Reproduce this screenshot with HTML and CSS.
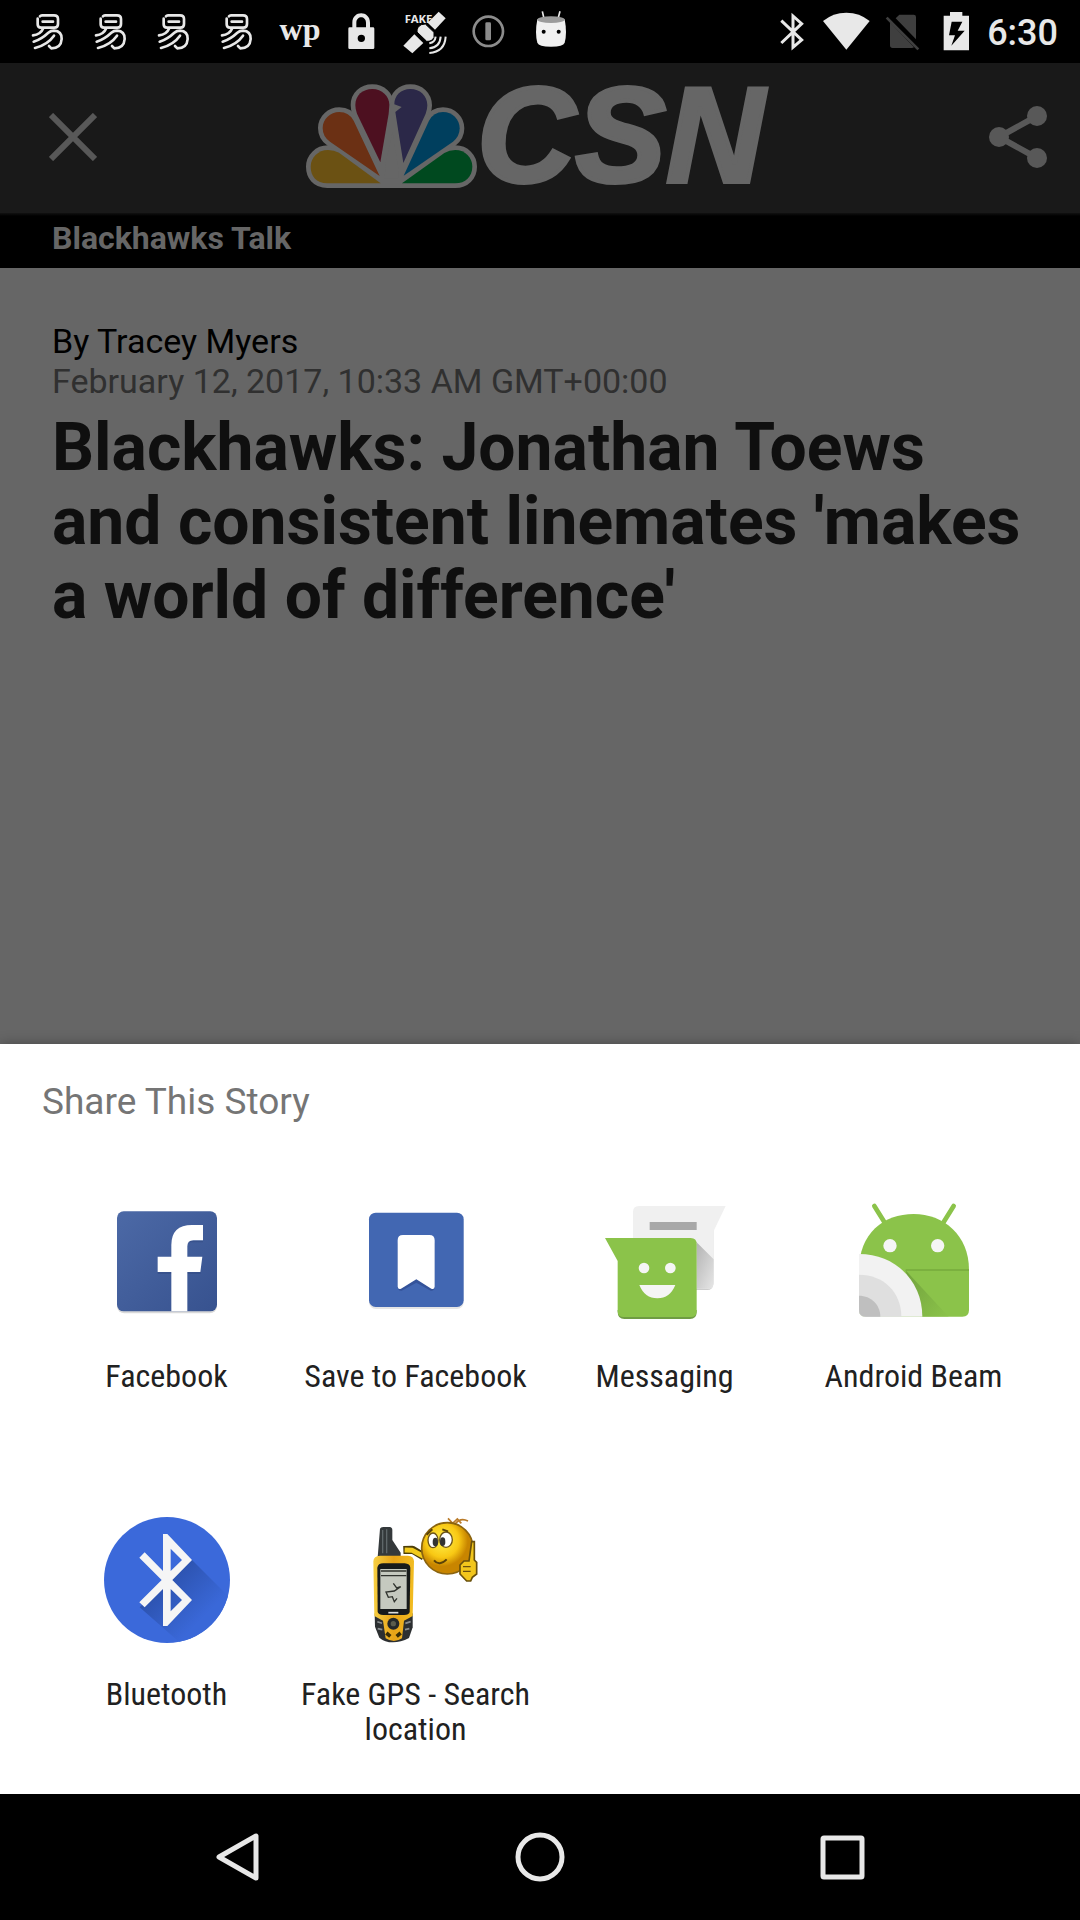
FILE: index.html
```html
<!DOCTYPE html>
<html lang="en">
<head>
<meta charset="utf-8">
<meta name="viewport" content="width=device-width, initial-scale=1">
<title>Blackhawks Talk</title>
<link rel="stylesheet" href="styles.css">
</head>
<body>
<svg class="defs" aria-hidden="true">
  <defs>
    <symbol id="yi" viewBox="48 0 189 189">
      <g fill="none" stroke="#e8e8e8" stroke-width="8" stroke-linecap="round" stroke-linejoin="round">
        <path d="M113 56V73Q113 83 123 83H163Q174 83 174 72V57Q174 46 162 46H126Q122 46 120 49"/>
        <path d="M128 65H159"/>
        <path d="M129 86Q122 103 99 106"/>
        <path d="M101 125Q125 117 145 98Q152 92 162 92Q186 93 185 117Q183 145 154 145L147 138"/>
        <path d="M105 144Q143 134 162 107"/>
      </g>
    </symbol>
  </defs>
</svg>

<header class="status">
  <div class="status-group">
    <svg class="slot"><use href="#yi"/></svg>
    <svg class="slot"><use href="#yi"/></svg>
    <svg class="slot"><use href="#yi"/></svg>
    <svg class="slot"><use href="#yi"/></svg>
    <svg class="slot" viewBox="0 0 63 63"><text class="wp" x="32" y="40" text-anchor="middle">wp</text></svg>
    <svg class="slot" viewBox="-87 0 189 189"><path fill="#e8e8e8" fill-rule="evenodd" d="M-31 82H-23V68C-23 30 30 30 30 68V82H39Q43 82 43 86V143Q43 147 39 147H-31Q-35 147-35 143V86Q-35 82-31 82ZM-11 82H18V68C18 46-11 46-11 68ZM4 104A11 11 0 1 0 4 126A11 11 0 1 0 4 104Z"/></svg>
    <svg class="slot" viewBox="102 0 189 189">
      <text class="fake" x="134" y="68">FAKE</text>
      <g fill="#e8e8e8">
        <path d="M203 68L236 35L257 55L225 89Z"/>
        <path d="M163 103L190 129L157 160L130 137Z"/>
        <path stroke="#000" stroke-width="3" d="M184 74Q170 81 171 96L200 124Q216 125 222 112V97L196 72Z"/>
      </g>
      <g fill="none" stroke="#e8e8e8" stroke-width="6"><path d="M227 110Q225 127 208 130M242 110Q240 142 208 145M257 110Q254 156 208 159"/></g>
    </svg>
    <svg class="slot" viewBox="291 0 189 189"><circle cx="385" cy="94" r="44" fill="none" stroke="#8c8c8c" stroke-width="8"/><rect x="376" y="67" width="17" height="54" rx="4" fill="#8c8c8c"/></svg>
    <svg class="slot" viewBox="480 0 189 189"><path d="M547 34L552 56M600 34L594 56" stroke="#e8e8e8" stroke-width="5"/><path fill="#f0f0f0" d="M532 58H614Q622 100 614 128Q610 140 573 140T532 128Q524 100 532 58Z"/><ellipse cx="573" cy="59" rx="41" ry="10" fill="#9b9b9b"/><circle cx="551" cy="95" r="6"/><circle cx="596" cy="95" r="6"/></svg>
  </div>
  <div class="status-group status-right">
    <svg class="slot s-bt" viewBox="96 0 120 189"><path fill="none" stroke="#e8e8e8" stroke-width="9" d="M121 62L182 120L156 142V48L182 71L121 129"/></svg>
    <svg class="slot s-md" viewBox="216 0 180 189"><path fill="#e8e8e8" d="M316 149L246 63Q276 38 316 38T386 63Z"/></svg>
    <svg class="slot s-md" viewBox="396 0 180 189"><path fill="#3f3f3f" d="M464 55L475 44H518Q525 44 525 51V118ZM447 67L519 142Q516 144 512 144H455Q447 144 447 136Z"/><path d="M437 53L532 148" stroke="#3f3f3f" stroke-width="8"/></svg>
    <svg class="slot s-sm" viewBox="576 0 150 189"><path fill="#e8e8e8" fill-rule="evenodd" d="M627 36H664V47H684V151H608V47H627ZM632 65L624 106H642L631 137L671 92H650L664 65Z"/></svg>
    <time class="clock">6:30</time>
  </div>
</header>

<main class="story">
  <div class="topbar">
    <button class="icon-btn" type="button" aria-label="Close"><svg width="48" height="48" viewBox="0 0 48 48"><path d="M2 2L46 46M46 2L2 46" stroke="#585858" stroke-width="6"/></svg></button>
    <svg class="logo" viewBox="48 68 1404 324" role="img" aria-label="NBC CSN">
      <g fill="#666" stroke="#666" stroke-width="28" stroke-linejoin="round">
        <path d="M272 369H112C78 369 62 346 62 319C62 292 84 269 114 269Q132 269 147 277Z"/>
        <path d="M269 347L120 244Q98 229 98 203C98 176 121 155 148 155Q177 155 191 181Z"/>
        <path d="M271 306L201 160Q196 148 196 134C196 105 218 86 247 86C276 86 298 107 298 134L296 160Z"/>
        <path d="M340 308L316 155L335 140L313 132C313 105 333 86 361 86C390 86 412 106 412 135Q412 148 407 160Z"/>
        <path d="M341 346L417 181Q431 155 459 155C487 155 509 177 509 204Q509 228 489 244Z"/>
        <path d="M336 369L463 278Q478 269 496 269C526 269 547 292 547 319C547 348 526 369 496 369Z"/>
        <path d="M270 369H340V330L310 140L272 310Z"/>
      </g>
      <path fill="#6b5113" d="M272 369H112C78 369 62 346 62 319C62 292 84 269 114 269Q132 269 147 277Z"/>
      <path fill="#6b3014" d="M269 347L120 244Q98 229 98 203C98 176 121 155 148 155Q177 155 191 181Z"/>
      <path fill="#4d1020" d="M271 306L201 160Q196 148 196 134C196 105 218 86 247 86C276 86 298 107 298 134L296 160Z"/>
      <path fill="#2b2848" d="M340 308L316 155L335 140L313 132C313 105 333 86 361 86C390 86 412 106 412 135Q412 148 407 160Z"/>
      <path fill="#003f5e" d="M341 346L417 181Q431 155 459 155C487 155 509 177 509 204Q509 228 489 244Z"/>
      <path fill="#00491f" d="M336 369L463 278Q478 269 496 269C526 269 547 292 547 319C547 348 526 369 496 369Z"/>
      <text class="csn" x="561" y="365">CSN</text>
    </svg>
    <button class="icon-btn icon-btn-end" type="button" aria-label="Share"><svg width="58" height="62" viewBox="0 0 58 62"><path d="M48 10L10 31L48 52" fill="none" stroke="#585858" stroke-width="6"/><g fill="#585858"><circle cx="48" cy="10" r="10"/><circle cx="10" cy="31" r="10"/><circle cx="48" cy="52" r="10"/></g></svg></button>
  </div>
  <div class="section-name">Blackhawks Talk</div>
  <article class="article">
    <p class="byline">By Tracey Myers</p>
    <p class="date">February 12, 2017, 10:33 AM GMT+00:00</p>
    <h1 class="headline">Blackhawks: Jonathan Toews and consistent linemates 'makes a world of difference'</h1>
  </article>
</main>

<section class="sheet" aria-labelledby="share-title">
  <h2 class="sheet-title" id="share-title">Share This Story</h2>
  <div class="targets">
    <button class="target" type="button">
      <svg class="app" viewBox="41 57 378 378">
        <defs><linearGradient id="fbg" x2="1" y2="1"><stop offset="0" stop-color="#4c69a6"/><stop offset="1" stop-color="#37528f"/></linearGradient></defs>
        <rect x="80" y="98" width="300" height="302" rx="22" fill="#000" opacity=".15"/>
        <rect x="80" y="94" width="300" height="300" rx="20" fill="url(#fbg)"/>
        <path fill="#2f4880" opacity=".5" d="M202 276H331V282H202ZM291 190Q291 183 303 183H338V187H300Z"/>
        <path fill="#fff" d="M243 394V276H202V230H243V195Q243 135 305 135H338V181H309Q291 181 291 199V230H336L330 276H291V394Z"/>
      </svg>
      <span class="label">Facebook</span>
    </button>
    <button class="target" type="button">
      <svg class="app" viewBox="787 57 378 378">
        <rect x="835" y="103" width="284" height="284" rx="20" fill="#000" opacity=".1"/>
        <rect x="835" y="98" width="284" height="283" rx="20" fill="#4267b2"/>
        <path fill="#34539a" d="M921 190V322Q922 334 933 332L977 308L1020 332Q1031 334 1032 322V190Z"/>
        <path fill="#fff" d="M937 165H1016Q1032 165 1032 181V320Q1031 329 1022 326L977 298L931 326Q922 329 921 320V181Q921 165 937 165Z"/>
      </svg>
      <span class="label">Save to Facebook</span>
    </button>
    <button class="target" type="button">
      <svg class="app" viewBox="34 57 378 378">
        <defs><linearGradient id="sh" x2="1" y2="1"><stop offset="0" stop-color="#aaa"/><stop offset="1" stop-color="#e6e6e6"/></linearGradient></defs>
        <path fill="#ccc" d="M127 100H368V312Q366 330 350 330H145Q127 330 127 312Z"/>
        <path fill="#f0f0f0" d="M145 78H405L369 153V308Q369 326 351 326H127V96Q127 78 145 78Z"/>
        <path fill="url(#sh)" d="M305 174L369 238V308Q369 326 351 326H318V190Z"/>
        <rect x="177" y="126" width="141" height="24" fill="#a8a8a8"/>
        <path fill="#6f9c43" d="M81 390V396Q81 417 101 417H298Q318 417 318 396V390Z"/>
        <path fill="#8bc34a" d="M43 174H300Q318 174 318 192V393Q318 411 300 411H99Q81 411 81 393V243Z"/>
        <circle cx="160" cy="264" r="16" fill="#f5f5f5"/><circle cx="239" cy="264" r="16" fill="#f5f5f5"/>
        <path fill="#f5f5f5" d="M146 315H254Q238 355 200 355T146 315Z"/>
      </svg>
      <span class="label">Messaging</span>
    </button>
    <button class="target" type="button">
      <svg class="app" viewBox="782 57 378 378">
        <defs><linearGradient id="bsh" x2="1" y2="1"><stop offset="0" stop-color="#588030"/><stop offset="1" stop-color="#8bc34a"/></linearGradient></defs>
        <path d="M852 78L888 136M1090 78L1054 136" stroke="#8bc34a" stroke-width="14" stroke-linecap="round"/>
        <path fill="#8bc34a" d="M806 270C806 160 880 102 970 102S1136 165 1136 270V390Q1136 410 1116 410H826Q806 410 806 390Z"/>
        <path fill="url(#bsh)" d="M945 270L1075 410H990Z" opacity=".5"/>
        <path d="M946 270H1136" stroke="#76aa3c" stroke-width="4"/>
        <circle cx="899" cy="197" r="20" fill="#f5f5f5"/><circle cx="1042" cy="197" r="20" fill="#f5f5f5"/>
        <path fill="#f2f2f2" d="M806 222C915 222 996 303 996 410H826Q806 410 806 390Z"/>
        <path fill="#dfdfdf" d="M806 284C880 284 933 337 933 410H826Q806 410 806 390Z"/>
        <path fill="#bfbfbf" d="M806 347C842 347 870 374 870 410H826Q806 410 806 390Z"/>
      </svg>
      <span class="label">Android Beam</span>
    </button>
    <button class="target" type="button">
      <svg class="app" viewBox="41 51 378 378">
        <defs><linearGradient id="bts" gradientUnits="userSpaceOnUse" x1="230" y1="200" x2="360" y2="330"><stop offset="0" stop-color="#2a4fa8"/><stop offset="1" stop-color="#3a68d8"/></linearGradient><clipPath id="btc"><circle cx="230" cy="240" r="189"/></clipPath></defs>
        <circle cx="230" cy="240" r="189" fill="#3b69da"/>
        <path clip-path="url(#btc)" fill="url(#bts)" d="M305 180L420 295V429H270L148 322L230 240Z"/>
        <path fill="#f5f5f5" fill-rule="evenodd" d="M218 102H231L305 180L246 240L305 300L231 378H218V267L163 322L147 307L214 240L147 173L163 157L218 213ZM241 146V213L275 180ZM241 267V334L275 300Z"/>
      </svg>
      <span class="label">Bluetooth</span>
    </button>
    <button class="target" type="button">
      <svg class="app" viewBox="787 51 378 378">
        <defs>
          <radialGradient id="face" cx=".4" cy=".35"><stop offset="0" stop-color="#fff04a"/><stop offset=".65" stop-color="#f8c814"/><stop offset="1" stop-color="#c88500"/></radialGradient>
          <linearGradient id="gps"><stop offset="0" stop-color="#f7cf42"/><stop offset=".5" stop-color="#e8a317"/><stop offset="1" stop-color="#f2bd22"/></linearGradient>
        </defs>
        <path fill="#34393b" d="M868 86Q870 80 880 81H897Q905 82 905 90V120L930 158V172H861Z"/>
        <path d="M876 90V160M888 88V160" stroke="#5f676a" stroke-width="4"/>
        <path fill="none" stroke="#4c3e08" stroke-width="24" stroke-linejoin="round" d="M938 150L965 149L1000 170"/>
        <path fill="none" stroke="#f3cb1b" stroke-width="15" stroke-linejoin="round" d="M942 150L965 151L1000 170"/>
        <path fill="none" stroke="#b97a28" stroke-width="5" d="M1072 55L1086 70L1100 57L1112 70M1095 70Q1110 52 1132 63"/>
        <circle cx="1070" cy="145" r="77" fill="url(#face)" stroke="#8a6410" stroke-width="5"/>
        <g fill="#fff" stroke="#6b531b" stroke-width="4"><ellipse cx="1027" cy="121" rx="15" ry="22"/><ellipse cx="1066" cy="119" rx="19" ry="23"/></g>
        <ellipse cx="1034" cy="126" rx="8" ry="13" fill="#333"/><ellipse cx="1056" cy="125" rx="8" ry="13" fill="#333"/>
        <path fill="none" stroke="#5a4208" stroke-width="6" d="M1008 104L1025 88M1055 88L1072 94M1030 181Q1046 200 1068 178"/>
        <path fill="#f2c61c" stroke="#69500b" stroke-width="5" d="M1143 125H1151V180L1158 187V222L1145 232L1140 243H1128L1108 222V195L1120 183H1135Z"/>
        <path d="M1117 200H1140M1117 214H1140" stroke="#6b500d" stroke-width="4"/>
        <path fill="#2c2f31" d="M852 340H966V382L955 414Q930 427 907 427Q882 427 866 413L853 380Z"/>
        <path fill="url(#gps)" d="M848 184Q849 168 868 167H952Q969 168 970 184L966 348L940 362L934 415Q910 431 885 415L877 362L851 348Z"/>
        <path fill="#171a1b" d="M860 203Q862 190 878 190H942Q958 191 959 203L957 336Q955 345 940 345H878Q862 344 861 335Z"/>
        <rect x="869" y="207" width="79" height="120" fill="#c5c9bf"/>
        <path fill="none" stroke="#30332e" stroke-width="4" d="M871 213H947M871 227H947M908 250L918 264L930 260L911 273L886 276L893 292L905 290L911 305L919 295"/>
        <path d="M893 338H923" stroke="#ddd" stroke-width="5"/>
        <circle cx="908" cy="371" r="18" fill="#24282a"/><circle cx="908" cy="371" r="8" fill="#5b5c4c"/>
        <path d="M887 399L899 409M930 399L918 409" stroke="#3a2d05" stroke-width="11"/>
        <path d="M860 365L874 370M861 386L875 389M944 370L960 365M943 389L956 386" stroke="#8a8e90" stroke-width="5"/>
      </svg>
      <span class="label">Fake GPS - Search location</span>
    </button>
  </div>
</section>

<nav class="navbar" aria-label="System">
  <button class="nav-btn" type="button" aria-label="Back"><svg width="52" height="52" viewBox="0 0 52 52"><path d="M44 5V47L7 26Z" fill="none" stroke="#e8e8e8" stroke-width="5" stroke-linejoin="round"/></svg></button>
  <button class="nav-btn" type="button" aria-label="Home"><svg width="52" height="52" viewBox="0 0 52 52"><circle cx="26" cy="26" r="22" fill="none" stroke="#e8e8e8" stroke-width="5"/></svg></button>
  <button class="nav-btn" type="button" aria-label="Recent apps"><svg width="52" height="52" viewBox="0 0 52 52"><rect x="7" y="7" width="39" height="39" rx="1" fill="none" stroke="#e8e8e8" stroke-width="5" stroke-linejoin="round"/></svg></button>
</nav>
</body>
</html>
```

FILE: styles.css
```css
* {
  box-sizing: border-box;
}

body {
  margin: 0;
  min-height: 100vh;
  display: flex;
  flex-direction: column;
  background: #000;
  font-family: Roboto, "Noto Sans", sans-serif;
}

h1, h2, p {
  margin: 0;
}

button {
  padding: 0;
  border: 0;
  background: none;
  font: inherit;
  color: inherit;
}

svg {
  display: block;
}

.defs {
  width: 0;
  height: 0;
  position: absolute;
}

/* System status bar */
.status {
  display: flex;
  justify-content: space-between;
  padding: 0 22px 0 16px;
  background: #000;
}

.status-group {
  display: flex;
  align-items: center;
}

.slot {
  width: 63px;
  height: 63px;
}

.s-bt {
  width: 40px;
}

.s-md {
  width: 60px;
}

.s-sm {
  width: 50px;
}

.wp {
  font: bold 32px "Liberation Serif", serif;
  fill: #e8e8e8;
}

.fake {
  font: bold 34px "Noto Sans", sans-serif;
  fill: #e8e8e8;
}

.clock {
  margin-left: 4px;
  padding-top: 3px;
  font-size: 36px;
  line-height: 60px;
  font-weight: 500;
  color: #e8e8e8;
}

/* Dimmed article page */
.story {
  flex: 1;
  display: flex;
  flex-direction: column;
  background: #666;
}

.topbar {
  display: flex;
  align-items: center;
  justify-content: space-between;
  height: 150px;
  padding: 0 33px 3px;
  background: #191919;
}

.icon-btn {
  width: 80px;
  display: flex;
  justify-content: center;
}

.icon-btn-end {
  justify-content: flex-end;
}

.logo {
  width: 468px;
  height: 108px;
  overflow: visible;
}

.csn {
  font: italic bold 408px "Liberation Sans", Arial, sans-serif;
  fill: #666;
  stroke: #666;
  stroke-width: 12px;
}

.section-name {
  padding: 7px 52px 11px;
  background: linear-gradient(#111, #000 3px);
  color: #666;
  font-size: 32px;
  line-height: 37px;
  font-weight: 700;
}

.article {
  padding: 53px 52px;
}

.byline,
.date {
  font-size: 34px;
  line-height: 40px;
  color: #000;
}

.date {
  color: #303030;
}

.headline {
  padding-top: 10px;
  font-size: 66px;
  line-height: 74px;
  font-weight: 700;
  color: #0f0f0f;
}

/* Share sheet */
.sheet {
  padding: 37px 42px 47px;
  background: #fff;
  box-shadow: 0 0 12px rgba(0, 0, 0, 0.3);
}

.sheet-title {
  font-size: 37px;
  line-height: 42px;
  font-weight: 400;
  color: #757575;
}

.targets {
  display: grid;
  grid-template-columns: repeat(4, 1fr);
  row-gap: 88px;
  padding-top: 76px;
}

.target {
  display: flex;
  flex-direction: column;
  align-items: center;
  gap: 34px;
}

.app {
  width: 126px;
  height: 126px;
}

.label {
  min-height: 70px;
  padding: 0 4px;
  font-family: "Roboto Condensed", Roboto, sans-serif;
  font-size: 32px;
  line-height: 35px;
  color: #212121;
}

/* System navigation */
.navbar {
  display: flex;
  justify-content: center;
  height: 126px;
  background: #000;
}

.nav-btn {
  width: 28%;
  display: flex;
  align-items: center;
  justify-content: center;
}
```
